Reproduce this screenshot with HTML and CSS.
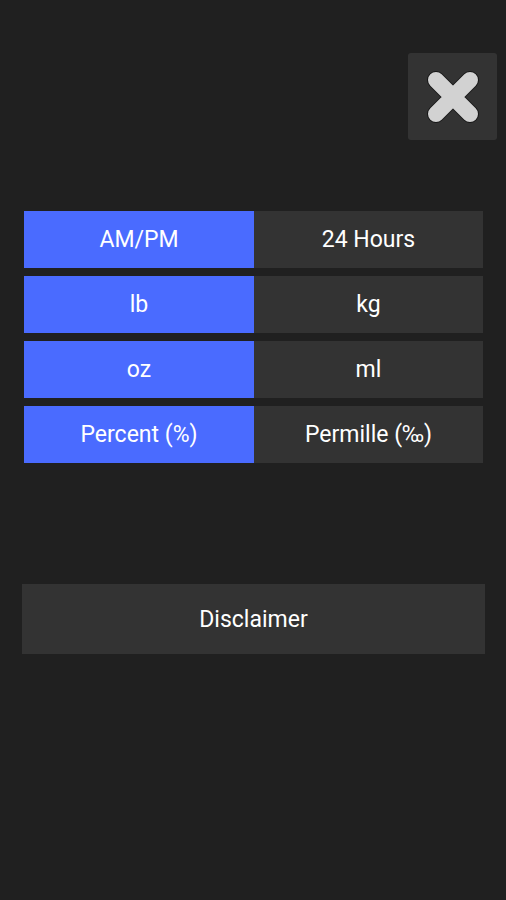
FILE: index.html
```html
<!DOCTYPE html>
<html lang="en">
<head>
  <meta charset="UTF-8">
  <title>Settings</title>
  <link rel="stylesheet" href="styles.css">
</head>
<body>

<div class="screen">
  <div class="top-bar">
    <button class="close-btn" aria-label="Close">
      <svg width="56" height="54" viewBox="0 0 56 54">
        <path d="M11 10 L45 44 M45 10 L11 44" stroke="#161616" stroke-width="18" stroke-linecap="round"/>
        <path d="M11 10 L45 44 M45 10 L11 44" stroke="#d2d2d2" stroke-width="16" stroke-linecap="round"/>
      </svg>
    </button>
  </div>

  <div class="toggles">
    <div class="toggle-row">
      <div class="opt active">AM/PM</div>
      <div class="opt">24 Hours</div>
    </div>
    <div class="toggle-row">
      <div class="opt active">lb</div>
      <div class="opt">kg</div>
    </div>
    <div class="toggle-row">
      <div class="opt active">oz</div>
      <div class="opt">ml</div>
    </div>
    <div class="toggle-row">
      <div class="opt active">Percent (%)</div>
      <div class="opt">Permille (‰)</div>
    </div>
  </div>

  <button class="disclaimer">Disclaimer</button>
</div>

</body>
</html>
```

FILE: styles.css
```css
html, body {
  margin: 0;
  height: 100%;
}
body {
  background: #202020;
  font-family: Roboto, "Noto Sans", sans-serif;
  color: #fff;
}
.screen {
  padding: 53px 9px 0 22px;
}
.top-bar {
  display: flex;
  justify-content: flex-end;
}
.close-btn {
  width: 89px;
  height: 87px;
  background: #333;
  border: none;
  border-radius: 3px;
  display: flex;
  align-items: center;
  justify-content: center;
  padding: 0;
  cursor: pointer;
}
.toggles {
  margin-top: 71px;
  margin-left: 2px;
  width: 459px;
  display: flex;
  flex-direction: column;
  gap: 8px;
}
.toggle-row {
  display: grid;
  grid-template-columns: 230px 229px;
  height: 57px;
}
.opt {
  background: #333;
  display: flex;
  align-items: center;
  justify-content: center;
  font-size: 23px;
}
.opt.active {
  background: #4a6bff;
}
.disclaimer {
  display: block;
  margin-top: 121px;
  width: 463px;
  height: 70px;
  background: #333;
  border: none;
  color: #fff;
  font-family: Roboto, "Noto Sans", sans-serif;
  font-size: 23px;
  cursor: pointer;
}
```
